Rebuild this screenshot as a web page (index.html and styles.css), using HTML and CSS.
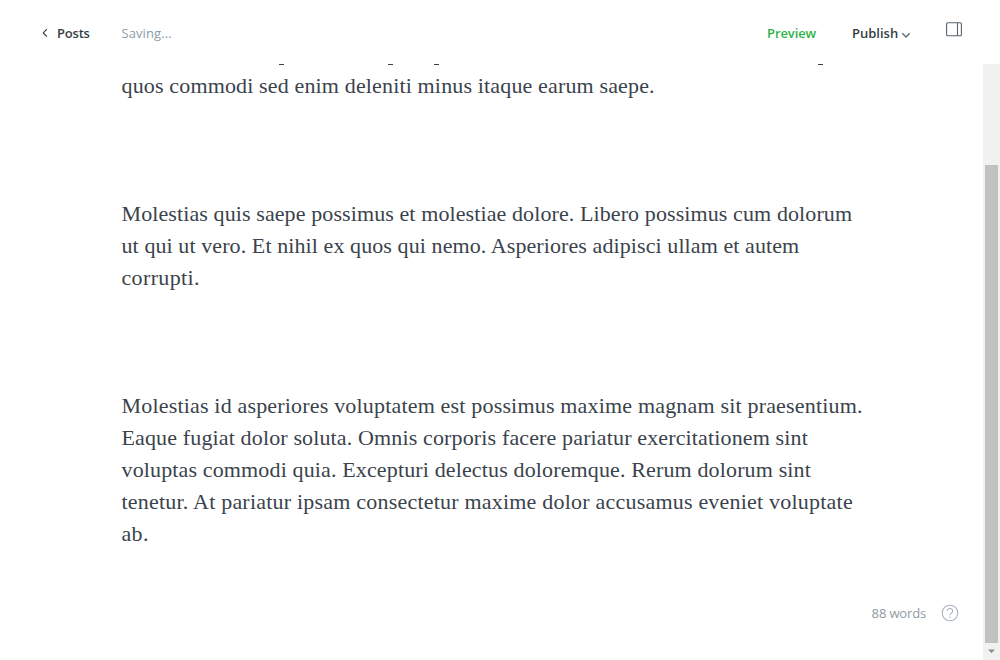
FILE: index.html
```html
<!DOCTYPE html>
<html lang="en">
<head>
<meta charset="utf-8">
<title>Editor</title>
<link rel="stylesheet" href="styles.css">
</head>
<body>
<div class="editor">
  <header class="toolbar">
    <a class="back"><svg width="6" height="10" viewBox="0 0 6 10"><path d="M4.9 1.1 1.3 4.9l3.6 3.8"/></svg><span class="posts">Posts</span></a>
    <span class="status">Saving...</span>
    <a class="preview">Preview</a>
    <a class="publish"><span class="publish-label">Publish</span><svg width="10" height="7" viewBox="0 0 10 7"><path d="M1.3 1.3 5 5l3.7-3.7"/></svg></a>
    <svg class="panel" width="16" height="15" viewBox="0 0 16 15"><rect x=".6" y=".8" width="14.8" height="13" rx="1"/><path d="M11.5 1v13"/></svg>
  </header>
  <div class="body">
    <main class="content">
      <svg class="clipped" width="740" height="6" viewBox="0 0 740 6"><path d="M157 .5h5M266 .5h5M312 .5h5M696 .5h5"/></svg>
      <p><span class="a1">quos commodi sed enim deleniti minus itaque earum saepe.</span></p>
      <p><span class="b1">Molestias quis saepe possimus et molestiae dolore. Libero possimus cum dolorum</span>
      <span class="b2">ut qui ut vero. Et nihil ex quos qui nemo. Asperiores adipisci ullam et autem</span>
      <span class="b3">corrupti.</span></p>
      <p><span class="c1">Molestias id asperiores voluptatem est possimus maxime magnam sit praesentium.</span>
      <span class="c2">Eaque fugiat dolor soluta. Omnis corporis facere pariatur exercitationem sint</span>
      <span class="c3">voluptas commodi quia. Excepturi delectus doloremque. Rerum dolorum sint</span>
      <span class="c4">tenetur. At pariatur ipsam consectetur maxime dolor accusamus eveniet voluptate</span>
      <span class="c5">ab.</span></p>
      <footer class="footer"><span class="words">88 words</span><svg width="18" height="18" viewBox="0 0 18 18"><circle cx="9" cy="9" r="7.8"/><path d="M6.3 7a2.7 2.6 0 1 1 4.1 2.2c-1 .6-1.4 1-1.4 2.1M9 12.6v1.3"/></svg></footer>
    </main>
    <div class="scrollbar"><div class="thumb"></div><svg width="17" height="17" viewBox="0 0 17 17"><path d="M5 6.5h7L8.5 10z"/></svg></div>
  </div>
</div>
</body>
</html>
```
FILE: styles.css
```css
body { margin: 0; background: #fff; color: #343f44; font-family: "Open Sans", "Noto Sans", sans-serif; }
svg { display: block; flex: none; fill: none; }
.editor { width: 1000px; height: 660px; display: flex; flex-direction: column; overflow: hidden; }
.toolbar { height: 64px; box-sizing: border-box; padding: 0 38px 0 42px; display: flex; align-items: center; font-size: 13px; line-height: 18px; }
.toolbar span, .preview { white-space: nowrap; margin-top: 2px; }
.back { width: 79.5px; display: flex; align-items: center; gap: 9px; font-weight: 600; }
.back svg { margin-top: 1px; stroke: #343f44; stroke-width: 1.2; }
.posts { letter-spacing: -.2px; }
.status { color: #8d9ba6; letter-spacing: .08px; }
.preview { margin-left: auto; width: 85px; color: #30b24a; font-weight: 600; letter-spacing: -.1px; }
.publish { width: 94px; display: flex; align-items: center; gap: 3px; font-weight: 600; }
.publish svg { margin-top: 6px; stroke: #60676e; stroke-width: 1.3; }
.panel { margin-bottom: 5px; stroke: #59636b; stroke-width: 1.1; }
.body { flex: 1; display: flex; }
.content { flex: 1; display: flex; flex-direction: column; padding-left: 121.5px; font-family: "Liberation Serif", serif; font-size: 22px; line-height: 32px; color: #3a434c; }
.clipped { stroke: #3a434c; }
.content p { margin: 0 0 96px; }
.content p:nth-of-type(3) { margin-bottom: 0; }
.content p span { display: block; width: max-content; white-space: nowrap; letter-spacing: .14px; }
.content p .a1 { letter-spacing: .15px; }
.content p .b1 { letter-spacing: .1px; }
.content p .b2 { letter-spacing: .09px; }
.content p .b3, .content p .c5 { letter-spacing: .35px; }
.content p .c1 { letter-spacing: .18px; }
.content p .c4 { letter-spacing: .21px; }
.footer { display: flex; align-items: center; gap: 15px; margin: 54px 24px 0 auto; font: 13px/18px "Open Sans", "Noto Sans", sans-serif; color: #8d9ba6; }
.words { letter-spacing: -.15px; }
.footer svg { stroke: #aab3bf; stroke-width: 1.1; }
.scrollbar { width: 17px; background: #f1f1f1; display: flex; flex-direction: column; justify-content: flex-end; }
.thumb { height: 478px; margin: 0 2px; background: #c1c1c1; }
.scrollbar svg { fill: #8b8b8b; }
```
